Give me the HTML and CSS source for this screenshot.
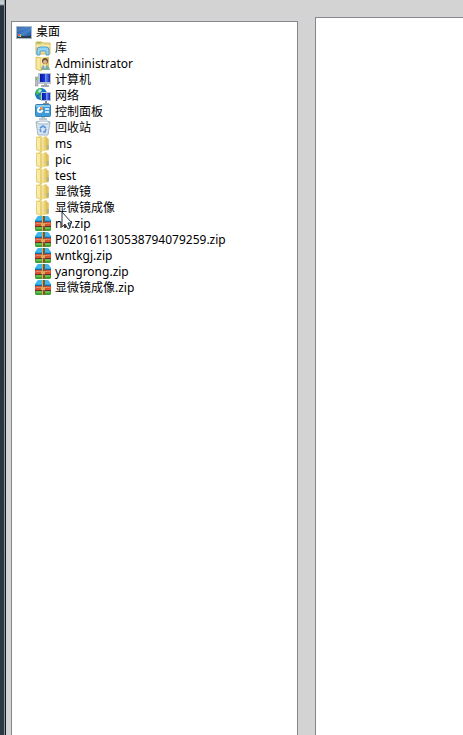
FILE: index.html
```
<!DOCTYPE html>
<html lang="zh-CN">
<head>
  <meta charset="UTF-8" />
  <meta name="viewport" content="width=device-width, initial-scale=1.0" />
  <title>桌面</title>
  <link rel="stylesheet" href="styles.css">
</head>
<body>
  <!-- shared icons, used by the tree rows -->
  <svg class="sprite" aria-hidden="true">
    <defs>
      <linearGradient id="screen" x1="0" y1="0" x2="1" y2="1">
        <stop offset="0" stop-color="#1c4c94" />
        <stop offset="0.6" stop-color="#4585cc" />
        <stop offset="1" stop-color="#1d5298" />
      </linearGradient>
      <linearGradient id="monitor" x1="0" y1="0" x2="1" y2="0">
        <stop offset="0" stop-color="#0718a0" />
        <stop offset="0.45" stop-color="#1a35d6" />
        <stop offset="0.55" stop-color="#6d93f2" />
        <stop offset="1" stop-color="#1024b4" />
      </linearGradient>
      <linearGradient id="paper" x1="0" y1="0" x2="1" y2="0">
        <stop offset="0" stop-color="#fbeeaa" />
        <stop offset="1" stop-color="#dfc057" />
      </linearGradient>
      <symbol id="desktop" viewBox="0 0 16 16">
        <rect x="0" y="2" width="16" height="13" fill="#a9b9ca" />
        <rect x="1" y="3" width="14" height="9" fill="url(#screen)" />
        <path d="M1 3h14L1 8z" fill="#7ba6da" opacity="0.35" />
        <rect x="1" y="12" width="14" height="2" fill="#303c4a" />
        <path d="M2 10h2v2H2z" fill="#e8613a" />
        <path d="M4 10h1v2H4z" fill="#8ccc48" />
        <path d="M2 12h2v1H2z" fill="#49a6ee" />
        <path d="M4 12h1v1H4z" fill="#f4d24a" />
      </symbol>
      <symbol id="library" viewBox="0 0 16 16">
        <path d="M1 2h6l1 1h7v11H1z" fill="#f0dc8a" stroke="#d5b95c" />
        <path d="M2 3h4" stroke="#5cb548" />
        <path d="M1 6h14" stroke="#fff5c4" />
        <path d="M2 15V10q0-3 3-3h6q3 0 3 3v5h-3v-3q0-1-1-1H6q-1 0-1 1v3z" fill="#8fd2f4" stroke="#4c9fd0" />
      </symbol>
      <symbol id="user" viewBox="0 0 16 16">
        <path d="M1 1l5 1v13l-5-2z" fill="#f7e79f" stroke="#dfc25e" />
        <path d="M6 1h8v13H6z" fill="url(#paper)" />
        <circle cx="10" cy="5" r="3" fill="#69513b" />
        <circle cx="10" cy="6" r="2" fill="#dfb28b" />
        <path d="M6 14q0-5 4-5t5 5z" fill="#7fae9c" />
        <path d="M9 9h2l-1 4z" fill="#eef4f4" />
      </symbol>
      <symbol id="computer" viewBox="0 0 16 16">
        <rect x="0" y="5" width="3" height="9" fill="#b9bec3" stroke="#858b91" stroke-width="0.5" />
        <rect x="1" y="6" width="1" height="2" fill="#42d445" />
        <rect x="3" y="1" width="13" height="11" fill="#b9c0cd" />
        <rect x="5" y="2" width="10" height="8" fill="url(#monitor)" />
        <path d="M9 12h3v1h2v2H6v-2h3z" fill="#a3abb4" />
      </symbol>
      <symbol id="network" viewBox="0 0 16 16">
        <circle cx="6" cy="6" r="6" fill="#1476c4" />
        <path d="M1 3q2-3 5-3l1 2-2 1-1 3-2 1-1-1zM6 6l4 1-1 3-3 2-2-4z" fill="#42bd4b" />
        <path d="M4 1l3 1-2 3-2-1z" fill="#a8ecd2" />
        <rect x="6" y="4" width="10" height="9" fill="#b7c1d2" />
        <rect x="7" y="5" width="8" height="7" fill="url(#monitor)" />
        <path d="M10 13h2v2h2v1H8v-1h2z" fill="#858e98" />
      </symbol>
      <symbol id="control" viewBox="0 0 16 16">
        <rect x="0.5" y="0.5" width="15" height="12" rx="1" fill="#3f9cd8" stroke="#367fae" />
        <path d="M1 1h14v2H1z" fill="#86cbf2" />
        <circle cx="5" cy="6" r="3" fill="#fff" />
        <path d="M5 6V3a3 3 0 0 1 3 3z" fill="#f18b35" />
        <circle cx="5" cy="6" r="1" fill="#3f9cd8" />
        <path d="M10 5h4M10 8h4" stroke="#fff" stroke-width="1.5" />
        <path d="M6 13h4v1h2v2H4v-2h2z" fill="#bfc8cf" />
      </symbol>
      <symbol id="recycle" viewBox="0 0 16 16">
        <path d="M1 2l2 13h10l2-13z" fill="#d6e3ee" stroke="#a4b6c6" />
        <path d="M1 2l4-1h7l3 1-3 2H4z" fill="#f4f9fc" stroke="#a4b6c6" />
        <path d="M5 8l3-2 3 2M11 9l-1 3H8M5 9l1 3" fill="none" stroke="#5b98e0" stroke-width="1.6" />
      </symbol>
      <symbol id="folder" viewBox="0 0 16 16">
        <path d="M1 1l5-1 1 1v14l-1 1-5-2z" fill="#e9d06f" />
        <path d="M2 2l4 0v13l-4-2z" fill="#f9ecab" />
        <path d="M6 2l5-2 1 1v13l-6 2z" fill="url(#paper)" />
        <path d="M12 2l2 1v11l-2 1z" fill="#e6cd77" />
        <path d="M6 2v14M12 2v12" stroke="#d7b751" />
        <path d="M13 9v4" stroke="#68a9cf" />
      </symbol>
      <symbol id="archive" viewBox="0 0 16 16">
        <path d="M3 0h10l3 4v2H0V4z" fill="#28a7e4" />
        <path d="M3 1h10M1 3h14" stroke="#5cc7f5" />
        <rect x="0" y="5" width="16" height="1" fill="#17669c" />
        <rect x="0" y="6" width="16" height="4" fill="#d4552f" />
        <rect x="1" y="7" width="14" height="1" fill="#ea8460" />
        <rect x="0" y="10" width="16" height="1" fill="#702b20" />
        <path d="M0 11h16v3l-1 1H1l-1-1z" fill="#3f9f30" />
        <path d="M1 12h14" stroke="#91d972" />
        <rect x="7" y="0" width="3" height="15" fill="#7c5a2e" />
        <rect x="7" y="0" width="1" height="15" fill="#d8a957" />
        <rect x="6" y="7" width="4" height="3" fill="#d8a957" />
      </symbol>
    </defs>
  </svg>

  <div class="edge"></div>
  <main class="workspace">
    <nav class="panel tree-panel">
      <div class="node"><svg class="icon"><use href="#desktop" /></svg>桌面</div>
      <ul class="tree">
        <li class="node"><svg class="icon"><use href="#library" /></svg>库</li>
        <li class="node"><svg class="icon"><use href="#user" /></svg>Administrator</li>
        <li class="node"><svg class="icon"><use href="#computer" /></svg>计算机</li>
        <li class="node"><svg class="icon"><use href="#network" /></svg>网络</li>
        <li class="node"><svg class="icon"><use href="#control" /></svg>控制面板</li>
        <li class="node"><svg class="icon"><use href="#recycle" /></svg>回收站</li>
        <li class="node"><svg class="icon"><use href="#folder" /></svg>ms</li>
        <li class="node"><svg class="icon"><use href="#folder" /></svg>pic</li>
        <li class="node"><svg class="icon"><use href="#folder" /></svg>test</li>
        <li class="node"><svg class="icon"><use href="#folder" /></svg>显微镜</li>
        <li class="node"><svg class="icon"><use href="#folder" /></svg>显微镜成像</li>
        <li class="node">
          <svg class="icon"><use href="#archive" /></svg>nw.zip
          <svg class="cursor" viewBox="0 0 12 19" aria-hidden="true">
            <path d="M1 1v15l3-3 3 5 2-1-2-5h4z" fill="#fff" stroke="#2f3440" />
          </svg>
        </li>
        <li class="node"><svg class="icon"><use href="#archive" /></svg>P020161130538794079259.zip</li>
        <li class="node"><svg class="icon"><use href="#archive" /></svg>wntkgj.zip</li>
        <li class="node"><svg class="icon"><use href="#archive" /></svg>yangrong.zip</li>
        <li class="node"><svg class="icon"><use href="#archive" /></svg>显微镜成像.zip</li>
      </ul>
    </nav>
    <section class="panel content-panel"></section>
  </main>
</body>
</html>
```

FILE: styles.css
```
* {
  box-sizing: border-box;
}
body {
  margin: 0;
  display: flex;
  min-height: 100vh;
  background: #d3d3d3;
  color: #000;
  font-family: "Noto Sans", "Noto Sans CJK SC", sans-serif;
  font-size: 12px;
  line-height: 16px;
}
.sprite {
  position: absolute;
  width: 0;
  height: 0;
}
.edge {
  width: 6px;
  flex-shrink: 0;
  background: linear-gradient(#b9c2c8, #d0d4d6 4px, #26323e 6px, #2a3744);
  border-right: 1px solid #15181c;
  box-shadow: inset -1px 0 #8b9096;
}
.workspace {
  flex: 1;
  display: grid;
  grid-template-columns: 33fr 17fr;
  gap: 17px;
  padding-left: 5px;
}
.panel {
  background: #fff;
  border: 1px solid #828790;
  border-bottom: none;
}
.tree-panel {
  margin-top: 21px;
  padding: 2px 4px;
}
.content-panel {
  margin-top: 17px;
  border-right: none;
}
.tree {
  list-style: none;
  margin: 0;
  padding: 0 0 0 19px;
}
.node {
  position: relative;
  display: flex;
  align-items: center;
  gap: 4px;
  height: 16px;
  white-space: nowrap;
}
.icon {
  width: 16px;
  height: 16px;
  flex-shrink: 0;
}
/* mouse pointer resting on the row */
.cursor {
  position: absolute;
  left: 26px;
  top: -5px;
  width: 12px;
  height: 19px;
}
```
